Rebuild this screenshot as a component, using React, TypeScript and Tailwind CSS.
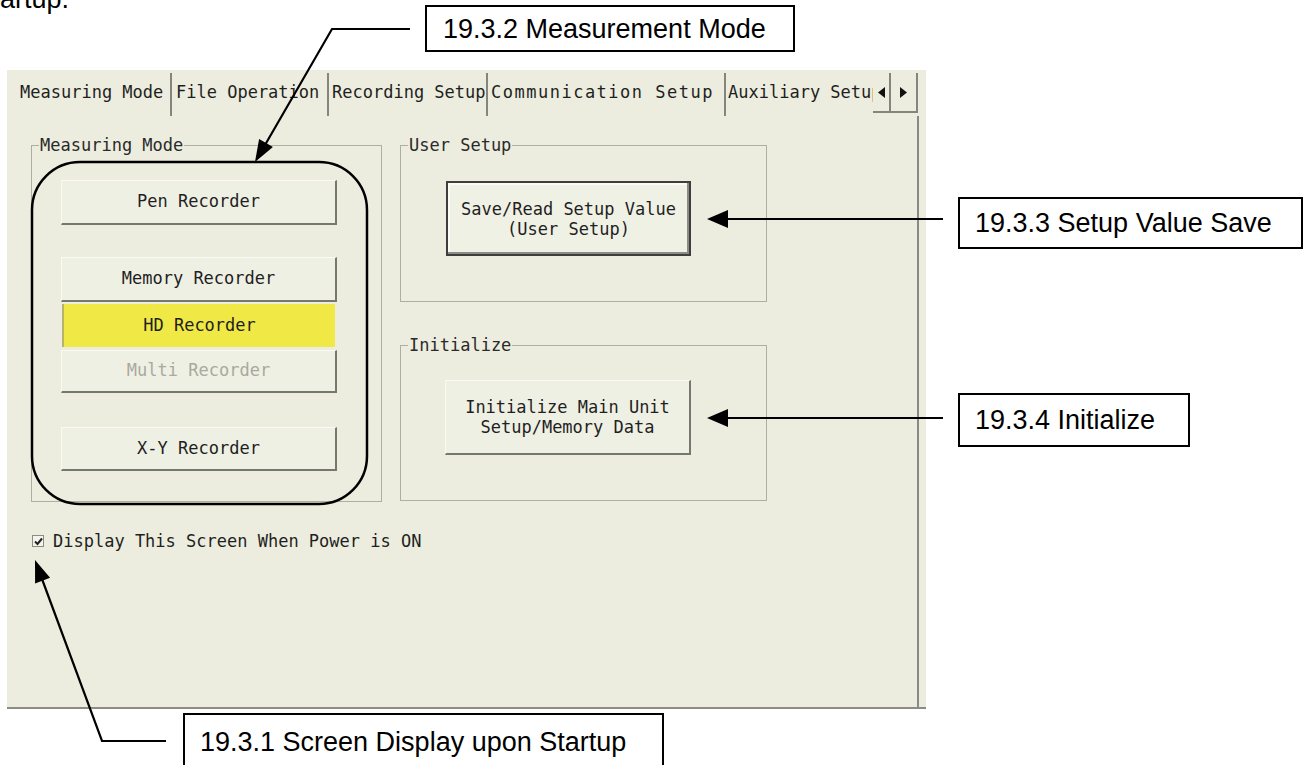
import React from "react";

const panelBg = "bg-[#ecedde]";

function Group({
  label,
  className = "",
  children,
}: {
  label: string;
  className?: string;
  children?: React.ReactNode;
}) {
  return (
    <div className={`relative border border-[#aeaea2] ${className}`}>
      <span
        className={`absolute -top-[11px] left-[7px] ${panelBg} px-[1px] text-[17px] leading-[20px] text-[#2a2a2a]`}
      >
        {label}
      </span>
      {children}
    </div>
  );
}

function RaisedButton({
  children,
  className = "",
}: {
  children: React.ReactNode;
  className?: string;
}) {
  return (
    <div
      className={`flex items-center justify-center text-center bg-[#eff0e4] border-t border-l border-[#fafaf3] border-r-2 border-b-2 border-r-[#77776f] border-b-[#77776f] ${className}`}
    >
      {children}
    </div>
  );
}

function Callout({ text, className }: { text: string; className: string }) {
  return (
    <div
      className={`absolute flex items-start border-2 border-black bg-white font-['Liberation_Sans',Arial,sans-serif] text-[27px] leading-[30px] text-black whitespace-nowrap ${className}`}
    >
      {text}
    </div>
  );
}

const tabs = [
  { label: "Measuring Mode", w: "w-[165px] pl-[13px]" },
  { label: "File Operation", w: "w-[157px] pl-[4px]" },
  { label: "Recording Setup", w: "w-[159px] pl-[3px]" },
  { label: "Communication Setup", w: "w-[238px] pl-[3px] tracking-[1.5px]" },
];

export default function App() {
  return (
    <div className="relative w-[1304px] h-[765px] overflow-hidden bg-white">
      {/* cut-off line of the page above */}
      <div className="h-[70px] overflow-hidden">
        <p className="-mt-[14px] font-['Liberation_Sans',Arial,sans-serif] text-[27px] leading-[26px] text-black">
          artup.
        </p>
      </div>

      {/* Device screen */}
      <div
        className={`ml-[7px] w-[919px] h-[639px] ${panelBg} border-b-2 border-[#8c8c84] flex flex-col pt-[3px] font-['DejaVu_Sans_Mono',monospace] text-[17px] text-[#1f1f1f]`}
      >
        {/* Tab strip */}
        <div className="flex h-[43px] shrink-0">
          {tabs.map((t) => (
            <div
              key={t.label}
              className={`${t.w} h-full border-r-2 border-[#85857d] pt-[9px] leading-[20px] whitespace-nowrap`}
            >
              {t.label}
            </div>
          ))}
          <div className="w-[147px] h-full overflow-hidden pl-[2px] pt-[9px] leading-[20px] whitespace-nowrap">
            Auxiliary Setup
          </div>
          <div className="flex w-[45px] h-[40px] border-b-2 border-[#85857d]">
            <div className="flex w-[18px] items-center justify-center border-r-2 border-[#85857d]">
              <svg width="7" height="11" viewBox="0 0 7 11">
                <polygon points="7,0 7,11 0,5.5" fill="#111" />
              </svg>
            </div>
            <div className="flex flex-1 items-center justify-center border-r-2 border-[#85857d]">
              <svg width="7" height="11" viewBox="0 0 7 11">
                <polygon points="0,0 0,11 7,5.5" fill="#111" />
              </svg>
            </div>
          </div>
        </div>

        {/* Tab content */}
        <div className="w-[912px] flex-1 border-r-2 border-[#8a8a82] pl-[24px] pt-[29px] flex flex-col">
          <div className="flex">
            <Group
              label="Measuring Mode"
              className="w-[351px] h-[357px] pl-[29px] pt-[34px] flex flex-col"
            >
              <RaisedButton className="w-[276px] h-[45px]">Pen Recorder</RaisedButton>
              <RaisedButton className="w-[276px] h-[45px] mt-[32px]">
                Memory Recorder
              </RaisedButton>
              <div className="flex items-center justify-center ml-[1px] mt-[2px] w-[273px] h-[43px] bg-[#efe845] border-l-2 border-[#b9b46a]">
                HD Recorder
              </div>
              <RaisedButton className="w-[276px] h-[43px] mt-[3px] text-[#a9a9a0]">
                Multi Recorder
              </RaisedButton>
              <RaisedButton className="w-[276px] h-[44px] mt-[34px]">X-Y Recorder</RaisedButton>
            </Group>

            <div className="ml-[18px] flex flex-col">
              <Group label="User Setup" className="w-[367px] h-[157px] pl-[45px] pt-[35px]">
                <div className="flex w-[245px] h-[75px] items-center justify-center text-center leading-[20px] bg-[#f0f1e5] border-2 border-[#3e3e3e] shadow-[inset_-2px_-2px_0_#8c8c84,inset_2px_2px_0_#fbfbf6]">
                  Save/Read Setup Value
                  <br />
                  (User Setup)
                </div>
              </Group>
              <Group label="Initialize" className="mt-[43px] w-[367px] h-[156px] pl-[44px] pt-[34px]">
                <RaisedButton className="w-[246px] h-[75px] leading-[20px]">
                  Initialize Main Unit
                  <br />
                  Setup/Memory Data
                </RaisedButton>
              </Group>
            </div>
          </div>

          {/* Startup checkbox */}
          <div className="mt-[29px] ml-[1px] flex h-[20px] items-center gap-[9px] leading-[20px]">
            <div className="flex w-[12px] h-[12px] items-center justify-center border border-[#8c8c84] bg-[#f4f4ec]">
              <svg width="9" height="9" viewBox="0 0 9 9">
                <path d="M1 4.5 L3.5 7 L8 1.5" stroke="#222" strokeWidth="2" fill="none" />
              </svg>
            </div>
            <span>Display This Screen When Power is ON</span>
          </div>
        </div>
      </div>

      {/* Annotation callouts */}
      <Callout text="19.3.2 Measurement Mode" className="left-[425px] top-[5px] w-[370px] h-[47px] pl-[16px] pt-[7px]" />
      <Callout text="19.3.3 Setup Value Save" className="left-[958px] top-[197px] w-[345px] h-[52px] pl-[15px] pt-[9px]" />
      <Callout text="19.3.4 Initialize" className="left-[958px] top-[393px] w-[232px] h-[54px] pl-[15px] pt-[10px]" />
      <Callout text="19.3.1 Screen Display upon Startup" className="left-[183px] top-[713px] w-[481px] h-[58px] pl-[15px] pt-[12px]" />

      {/* Arrows and highlight outline */}
      <svg className="pointer-events-none absolute left-0 top-0" width="1304" height="765" viewBox="0 0 1304 765">
        <rect x="32" y="162" width="335" height="342" rx="48" fill="none" stroke="#000" strokeWidth="2.5" />

        <polyline points="410,29 332,29 265,145" fill="none" stroke="#000" strokeWidth="2.2" />
        <polygon points="255,162 272.9,147 259.1,139" fill="#000" />

        <line x1="943" y1="219" x2="722" y2="219" stroke="#000" strokeWidth="2.2" />
        <polygon points="707,219 728,210 728,228" fill="#000" />

        <line x1="943" y1="418" x2="722" y2="418" stroke="#000" strokeWidth="2.2" />
        <polygon points="707,418 728,409 728,427" fill="#000" />

        <polyline points="166,741 102,741 42,579" fill="none" stroke="#000" strokeWidth="2.2" />
        <polygon points="35,560 50.1,577.8 35.1,583.4" fill="#000" />
      </svg>
    </div>
  );
}
